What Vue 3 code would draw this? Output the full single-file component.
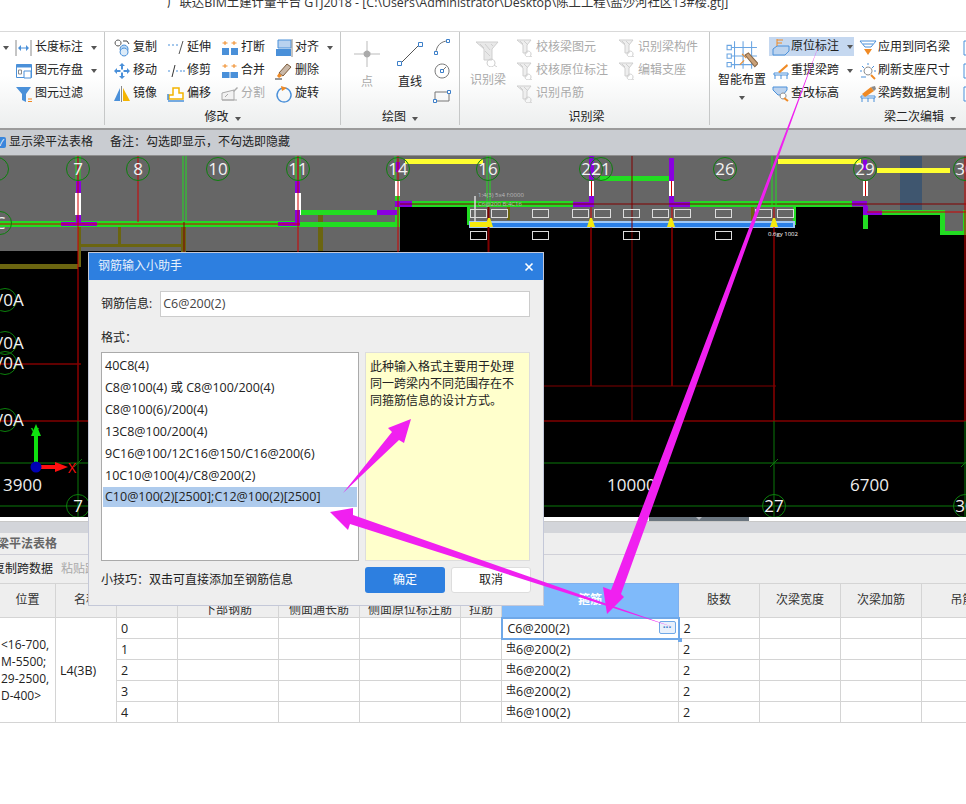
<template>
  <div class="page">
    <div class="titlebar">广联达BIM土建计量平台 GTJ2018 - [C:\Users\Administrator\Desktop\陈工工程\盐沙河社区13#楼.gtj]</div>

    <div class="ribbon">
      <section class="group g0">
        <div class="rows">
          <div v-for="t in group0" :key="t.label" class="tool">
            <Icon :name="t.icon" />
            <span>{{ t.label }}</span>
            <i v-if="t.caret" class="caret"></i>
          </div>
        </div>
        <i class="caret stray"></i>
      </section>

      <section class="group g1">
        <div class="rows four">
          <div v-for="t in group1" :key="t.label" class="tool" :class="{ off: t.off }">
            <Icon :name="t.icon" />
            <span>{{ t.label }}</span>
            <i v-if="t.caret" class="caret"></i>
          </div>
        </div>
        <div class="group-label">修改<i class="caret"></i></div>
      </section>

      <section class="group g2">
        <div class="draw">
          <div class="big off"><Icon name="point" :size="30" /><span>点</span></div>
          <div class="big"><Icon name="line" :size="30" /><span>直线</span></div>
          <div class="small-icons">
            <Icon name="arc" :size="18" />
            <Icon name="circle" :size="18" />
            <Icon name="rect" :size="18" />
          </div>
        </div>
        <div class="group-label">绘图<i class="caret"></i></div>
      </section>

      <section class="group g3">
        <div class="recognise">
          <div class="big off"><Icon name="beamId" :size="26" /><span>识别梁</span></div>
          <div class="col">
            <div v-for="t in group3a" :key="t" class="tool off"><Icon name="checkBeam" /><span>{{ t }}</span></div>
          </div>
          <div class="col">
            <div v-for="t in group3b" :key="t" class="tool off"><Icon name="checkBeam" /><span>{{ t }}</span></div>
          </div>
        </div>
        <div class="group-label shifted">识别梁</div>
      </section>

      <section class="group g4">
        <div class="smart">
          <div class="big wide">
            <Icon name="smart" :size="32" />
            <span>智能布置</span>
            <i class="caret"></i>
          </div>
          <div class="col col-a">
            <div v-for="t in group4a" :key="t.label" class="tool" :class="{ hot: t.hot }">
              <Icon :name="t.icon" />
              <span>{{ t.label }}</span>
              <i v-if="t.caret" class="caret"></i>
            </div>
          </div>
          <div class="col col-b">
            <div v-for="t in group4b" :key="t.label" class="tool">
              <Icon :name="t.icon" />
              <span>{{ t.label }}</span>
            </div>
          </div>
          <div class="col col-c">
            <div v-for="n in 3" :key="n" class="tool"><Icon name="edge" /></div>
          </div>
        </div>
        <div class="group-label right">梁二次编辑<i class="caret"></i></div>
      </section>
    </div>

    <div class="optionbar">
      <span class="check">✓</span>
      <span>显示梁平法表格</span>
      <span class="note">备注：勾选即显示，不勾选即隐藏</span>
    </div>

    <svg class="cad" viewBox="0 156 966 361" width="966" height="361">
      <rect v-for="(r, i) in cadRects" :key="'r' + i" :x="r[0]" :y="r[1]" :width="r[2]" :height="r[3]" :fill="r[4]" />
      <line v-for="(l, i) in cadLines" :key="'l' + i" :x1="l[0]" :y1="l[1]" :x2="l[2]" :y2="l[3]" :stroke="l[4]" :stroke-width="l[5] || 1" />
      <rect v-for="(b, i) in beamBoxes" :key="'b' + i" :x="b[0] + 0.5" :y="b[1] + 0.5" width="16" height="8" fill="none" stroke="#ddd" />
      <polygon v-for="x in supports" :key="'s' + x" :points="`${x - 4},227 ${x + 4},227 ${x + 1},218 ${x - 1},218`" fill="#f5e90c" />
      <g v-for="(a, i) in bubbles" :key="'a' + i">
        <circle :cx="a.x" :cy="a.y" r="11.5" fill="none" stroke="#0c800c" />
        <text :x="a.x" :y="a.y + 6" class="axis" text-anchor="middle">{{ a.t }}</text>
      </g>
      <g v-for="y in [300, 343, 363, 420]" :key="'v' + y">
        <circle cx="5" :cy="y" r="11.5" fill="none" stroke="#0c800c" />
        <text x="-3" :y="y + 6" class="axis">/0A</text>
      </g>
      <text x="3" y="491" class="dim">3900</text>
      <text x="607" y="491" class="dim">10000</text>
      <text x="850" y="491" class="dim">6700</text>
      <text x="768" y="236" class="tiny">0.6gy 1002</text>
      <text x="478" y="197" class="tiny gray">1:4(3) 5x4 f:0000</text>
      <text x="478" y="206" class="tiny gray">C6@200 B:4C16</text>

      <rect x="34" y="436" width="4" height="26" fill="#10e010" />
      <polygon points="36,424 31,436 41,436" fill="#10e010" />
      <rect x="40" y="465" width="18" height="4" fill="#ff1010" />
      <polygon points="68,467 55,462 55,472" fill="#ff1010" />
      <circle cx="36" cy="467" r="5.5" fill="#0000b4" />
      <text x="31" y="438" class="axis-y">Y</text>
      <text x="68" y="473" class="axis-x">X</text>
    </svg>

    <div class="grip"><i></i></div>
    <div class="band"></div>

    <div class="panel-title"><span>梁平法表格</span></div>
    <div class="panel-tools"><span>复制跨数据</span><span class="dim-txt">粘贴跨数据</span></div>

    <table class="grid">
      <colgroup>
        <col v-for="w in colWidths" :key="w.k" :style="{ width: w.w + 'px' }" />
      </colgroup>
      <thead>
        <tr>
          <th>位置</th>
          <th>名称</th>
          <th>跨号</th>
          <th class="low">下部钢筋</th>
          <th class="low">侧面通长筋</th>
          <th class="low">侧面原位标注筋</th>
          <th class="low">拉筋</th>
          <th class="active">箍筋</th>
          <th>肢数</th>
          <th>次梁宽度</th>
          <th>次梁加筋</th>
          <th>吊筋</th>
        </tr>
      </thead>
      <tbody>
        <tr v-for="(r, i) in spans" :key="i">
          <td v-if="i === 0" rowspan="5" class="pos">&lt;16-700,<br />M-5500;<br />29-2500,<br />D-400&gt;</td>
          <td v-if="i === 0" rowspan="5">L4(3B)</td>
          <td>{{ i }}</td>
          <td></td>
          <td></td>
          <td></td>
          <td></td>
          <td v-if="i === 0" class="editing">
            C6@200(2)
            <span class="more">···</span>
            <i class="handle"></i>
          </td>
          <td v-else class="bar"><span class="sym">虫</span>{{ r }}</td>
          <td>2</td>
          <td></td>
          <td></td>
          <td></td>
        </tr>
      </tbody>
    </table>

    <div class="dialog">
      <header>
        <span>钢筋输入小助手</span>
        <svg width="10" height="10" viewBox="0 0 10 10"><path d="M1.5 1.5l7 7M8.5 1.5l-7 7" stroke="#fff" stroke-width="1.6" /></svg>
      </header>
      <div class="dlg-body">
        <div class="info-row">
          <label>钢筋信息:</label>
          <div class="input">C6@200(2)</div>
        </div>
        <div class="fmt-label">格式：</div>
        <div class="fmt-row">
          <ul class="fmt-list">
            <li v-for="(f, i) in formats" :key="f" :class="{ sel: i === 6 }">{{ f }}</li>
          </ul>
          <div class="hint">此种输入格式主要用于处理同一跨梁内不同范围存在不同箍筋信息的设计方式。</div>
        </div>
        <div class="dlg-foot">
          <span class="tip">小技巧：双击可直接添加至钢筋信息</span>
          <button class="ok">确定</button>
          <button class="cancel">取消</button>
        </div>
      </div>
    </div>

    <svg class="arrows" width="966" height="804" viewBox="0 0 966 804">
      <polygon points="820,42 621,594 624,597 607,614 603,587 611,590" fill="#f020f0" />
      <polygon points="673,627 353,515 353,508 330,512 348,530 350,524" fill="#f020f0" />
      <polygon points="343,493 392,432 388,428 411,419 404,443 399,440" fill="#f020f0" />
    </svg>
  </div>
</template>

<script setup>
import { h } from 'vue';

const B = '#4a90d9';
const O = '#f08a24';
const G = '#8a8a8a';
const L = '#cfcfcf';

// each entry: path, fill, stroke
const icons = {
  length: [['M1 1v16M16 1v16', null, G], ['M4 9h9', null, B], ['M3 9l3-3v6zM14 9l-3-3v6z', B]],
  save: [['M1.5 2.5h15v13h-15z', '#fff', B], ['M1.5 2.5h15v3h-15z', B], ['M9 9h7v7H9z', '#fff', B], ['M3.5 8h3v4h-3z', null, G]],
  filter: [['M1 2h15l-5 7v8l-4-2V9z', B], ['M13 14h4M13 16.5h4', null, O]],
  copy: [['M5 1a3 3 0 1 0 .1 0', '#fff', '#555'], ['M11 6a4 4 0 1 0 .1 0', '#bcd8f2', B], ['M11 9a4 4 0 1 0 .1 0', '#dcebf8', B], ['M10 2h4l2 3', null, '#444']],
  move: [['M9 1l3 3h-2v3.5h-2V4H6zM9 17l3-3h-2v-3.5h-2V14H6zM1 9l3-3v2h3.5v2H4v2zM17 9l-3-3v2h-3.5v2H14v2z', B]],
  mirror: [['M1 16L7 3v13z', B], ['M10 3l7 13h-7z', '#f4b400'], ['M8.5 1v16', null, G]],
  extend: [['M1 6h2M5 6h2M9 6h2', null, B], ['M16 2l-4 13', null, '#555']],
  trim: [['M8 3L5 15', null, '#333'], ['M1 9h2M9 9h2M13 9h2M16 9h2', null, B]],
  offset: [['M2 14V10h4V3h6v5h4v6z', '#fff', '#f4b400', 1.5], ['M1 16h16', null, B, 1.5], ['M1 15V9', null, B, 1.5]],
  breakIt: [['M4 2v4M1.5 4h5M13 2v4M10.500 4h5', null, O], ['M1 9h7v7H1zM10 9h7v7h-7z', B]],
  merge: [['M4 2v4M1.5 4h5M13 2v4M10.500 4h5', null, O], ['M1 10h16v6H1z', B], ['M9 10v6', null, '#fff']],
  split: [['M1 15V8l12-3v10z', '#f2f2f2', '#aaa'], ['M1 15h15M4 12l3-3', null, '#aaa'], ['M12 6l4-4 1 1-4 4z', '#aaa']],
  align: [['M3 1h13v8H3z', '#b9d2ef', B], ['M1 10h15v7H1z', B], ['M17 0v18', null, G]],
  del: [['M12 2l4 3-8 9-4-3z', '#c9b8a8', '#7b5a3a'], ['M4 11l3 3-3 2-2-2z', O], ['M0 17h7', null, '#333']],
  rotate: [['M9 3a7 7 0 1 0 .1 0', null, B, 1.4], ['M6 1l6 2-5 3z', O]],
  point: [['M15 2v26M2 15h26', null, '#bbb'], ['M15 11.500a3.500 3.500 0 1 0 .1 0', '#aaa']],
  line: [['M5 25L25 5', null, '#555'], ['M2.500 22.500h4v4h-4zM23.500 3.500h4v4h-4z', '#fff', '#3c7fc9']],
  arc: [['M3 15C3 8 8 3 15 3', null, '#777'], ['M1.500 13.500h3v3h-3zM13.500 1.500h3v3h-3z', '#fff', '#3c7fc9']],
  circle: [['M9 2a7 7 0 1 0 .1 0', null, '#777'], ['M7.500 7.500h3v3h-3z', '#fff', '#3c7fc9'], ['M10 8l3-3', null, '#777']],
  rect: [['M2 6h14v9H2z', null, '#777'], ['M.5 13.500h3v3h-3zM14.500 4.500h3v3h-3z', '#fff', '#3c7fc9']],
  beamId: [['M1 1h22l-6 7v11H9V8z', '#e8e8e8', L], ['M5 3l4 4M10 3l5 6M16 3l2 2M10 10l5 5', null, L], ['M16 18a4 4 0 1 0 .1 0M19 24l3 2', null, L]],
  checkBeam: [['M1 1h14l-4 5v8H7V6z', '#eee', L], ['M4 2l3 3M8 2l4 4', null, L], ['M12 12a3 3 0 1 0 .1 0M14 17l2 1', null, L]],
  smart: [['M8 2v26M16 2v26M24 2v26M3 8h26M3 16h26M3 24h26', null, '#6aa5e2'], ['M1 6h4v4H1zM1 14h4v4H1zM1 22h4v4H1z', '#fff', '#6aa5e2'], ['M15 14l4 4M17 20l-4 4', null, O], ['M18 15l3-2 9 10-3 3z', '#caa27a', '#8a6a4a']],
  origin: [['M1 11l4-3h12v5l-4 4H1z', '#bcd3ee', B], ['M5 1v7', null, O], ['M5 2h6M5 5h5', null, O]],
  reraise: [['M2 11h14v2H2z', '#fff', B], ['M3 13v4M9 13v4M15 13v4', null, B], ['M6 10l9-8 1 2-8 7z', O]],
  level: [['M1 2h14v3l-4 5H6L1 5z', '#bcd3ee', B], ['M11 8a3 3 0 1 0 .1 0', '#fff', G], ['M12 13l4 3', null, O, 2]],
  applySame: [['M1 2h16l-5 6H6z', '#fff', B], ['M4 5h10', null, B], ['M5 10h8l-4 6z', O]],
  refresh: [['M9 1v2M3 4l2 2M15 4l-2 2M1 9h2M17 9h-2', null, B], ['M9 5a4 4 0 1 0 .1 0', '#fff', G], ['M12 13l4 4', null, O, 2], ['M2 15h5', null, B]],
  beamCopy: [['M2 11h14v2H2zM3 13v4M9 13v4M15 13v4', '#fff', B], ['M3 9l9-7 3 4-9 6z', O], ['M12 2l4-1 1 3-2 2z', G]],
  edge: [['M2 2h16v14H2z', '#fff', B], ['M6 6h2v2H6zM6 11h2v2H6z', O]]
};

const Icon = (props) =>
  h(
    'svg',
    {
      class: 'ic',
      width: props.size || 18,
      height: props.size || 18,
      viewBox: (props.size || 18) >= 26 ? `0 0 ${props.size === 26 ? 26 : 30} ${props.size === 26 ? 26 : 30}` : '0 0 18 18'
    },
    (icons[props.name] || []).map((p) =>
      h('path', { d: p[0], fill: p[1] || 'none', stroke: p[2] || 'none', 'stroke-width': p[3] || 1 })
    )
  );
Icon.props = ['name', 'size'];

const group0 = [
  { icon: 'length', label: '长度标注', caret: true },
  { icon: 'save', label: '图元存盘', caret: true },
  { icon: 'filter', label: '图元过滤' }
];

// column order: top to bottom, then next column
const group1 = [
  { icon: 'copy', label: '复制' },
  { icon: 'move', label: '移动' },
  { icon: 'mirror', label: '镜像' },
  { icon: 'extend', label: '延伸' },
  { icon: 'trim', label: '修剪' },
  { icon: 'offset', label: '偏移' },
  { icon: 'breakIt', label: '打断' },
  { icon: 'merge', label: '合并' },
  { icon: 'split', label: '分割', off: true },
  { icon: 'align', label: '对齐', caret: true },
  { icon: 'del', label: '删除' },
  { icon: 'rotate', label: '旋转' }
];

const group3a = ['校核梁图元', '校核原位标注', '识别吊筋'];
const group3b = ['识别梁构件', '编辑支座'];

const group4a = [
  { icon: 'origin', label: '原位标注', caret: true, hot: true },
  { icon: 'reraise', label: '重提梁跨', caret: true },
  { icon: 'level', label: '查改标高' }
];
const group4b = [
  { icon: 'applySame', label: '应用到同名梁' },
  { icon: 'refresh', label: '刷新支座尺寸' },
  { icon: 'beamCopy', label: '梁跨数据复制' }
];

const GRAY = '#666666';
const GRN = '#22dc22';
const PUR = '#8a00e0';
const OLV = '#6b6510';
const RED = '#d00000';
const DRED = '#800000';
const DGRN = '#0a780a';

const cadRects = [
  [0, 156, 400, 95, GRAY],
  [400, 156, 566, 51, GRAY],
  [467, 207, 329, 16, GRAY],
  [867, 207, 99, 8, GRAY],
  [945, 215, 21, 17, GRAY],
  [900, 156, 22, 59, '#3f566f'],
  // olive secondary beams
  [78, 225, 3, 42, OLV],
  [80, 244, 104, 3, OLV],
  [118, 227, 3, 18, OLV],
  [181, 225, 5, 28, OLV],
  [0, 264, 78, 5, OLV],
  [318, 215, 5, 36, OLV],
  [507, 207, 3, 13, OLV],
  [751, 207, 3, 13, OLV],
  // yellow
  [405, 159, 78, 5, '#ffff30'],
  [778, 159, 83, 5, '#ffff30'],
  [877, 168, 73, 5, '#ffff30'],
  // green main runs
  [0, 221, 300, 6, GRN],
  [300, 210, 77, 5, GRN],
  [300, 222, 97, 5, GRN],
  [395, 196, 5, 31, GRN],
  [400, 201, 67, 6, GRN],
  [467, 201, 106, 6, GRN],
  [467, 207, 3, 18, GRN],
  [690, 201, 162, 6, GRN],
  [793, 207, 3, 18, GRN],
  [600, 176, 69, 5, GRN],
  [863, 215, 5, 14, GRN],
  [882, 210, 63, 5, GRN],
  [940, 210, 5, 24, GRN],
  [940, 231, 26, 4, GRN],
  [963, 210, 3, 22, GRN],
  // beam
  [469, 221, 326, 7, '#9fc8f5'],
  [471, 223, 322, 4, '#2a80e8'],
  [470, 222, 18, 5, '#f5e90c'],
  // column stems, white with red heart
  [75, 193, 6, 22, '#fff'],
  [295, 193, 6, 22, '#fff'],
  [395, 181, 5, 15, '#fff'],
  [589, 181, 5, 15, '#fff'],
  [669, 181, 5, 15, '#fff'],
  [863, 181, 5, 15, '#fff'],
  // purple supports
  [76, 181, 5, 12, PUR],
  [76, 215, 5, 7, PUR],
  [61, 222, 36, 4, PUR],
  [295, 181, 5, 12, PUR],
  [295, 210, 5, 16, PUR],
  [278, 222, 22, 4, PUR],
  [377, 210, 20, 5, PUR],
  [395, 201, 17, 6, PUR],
  [395, 162, 5, 10, PUR],
  [573, 202, 17, 5, PUR],
  [589, 196, 5, 11, PUR],
  [589, 156, 5, 25, PUR],
  [669, 158, 5, 23, PUR],
  [669, 196, 5, 11, PUR],
  [669, 202, 21, 5, PUR],
  [852, 201, 15, 5, PUR],
  [863, 206, 5, 9, PUR],
  [863, 160, 4, 10, PUR],
  [863, 211, 19, 4, PUR]
];

const cadLines = [
  [0, 224, 300, 224, RED],
  [138, 156, 138, 222, RED],
  [76, 156, 76, 181, GRN],
  [80, 156, 80, 181, GRN],
  [78, 156, 78, 421, RED],
  [298, 156, 298, 253, RED],
  [398, 156, 398, 253, RED],
  [183, 156, 183, 222, GRN, 1],
  [186, 156, 186, 222, GRN, 1],
  [184, 222, 184, 253, DRED],
  [296, 156, 296, 181, GRN],
  [300, 156, 300, 181, GRN],
  [395, 156, 395, 181, GRN],
  [400, 204, 966, 204, DRED],
  [487, 156, 487, 207, GRN],
  [490, 156, 490, 207, GRN],
  [488.5, 207, 488.5, 253, DRED, 2],
  [591.5, 181, 591.5, 196, RED],
  [671.5, 181, 671.5, 196, RED],
  [865.5, 181, 865.5, 196, RED],
  [591, 207, 591, 386, RED],
  [632, 156, 632, 421, DRED],
  [672, 207, 672, 386, RED],
  [772, 156, 772, 207, GRN],
  [776, 156, 776, 207, GRN],
  [774, 207, 774, 421, RED],
  [867, 212, 966, 212, RED],
  [965, 156, 965, 421, RED],
  [540, 386, 776, 386, DRED],
  [0, 364, 81, 364, DRED, 1.5],
  [0, 421, 966, 421, DRED, 1.5],
  [0, 463, 966, 463, DGRN],
  [0, 506, 966, 506, DGRN],
  [78, 421, 78, 517, DGRN],
  [774, 421, 774, 517, DGRN],
  [965, 421, 965, 517, DGRN],
  [74, 467, 82, 459, DGRN],
  [770, 467, 778, 459, DGRN],
  [961, 467, 966, 462, DGRN],
  [475, 196, 475, 222, '#ddd', 1.5]
];

const beamBoxes = [
  [470, 209], [491, 209], [532, 209], [572, 209], [594, 209], [623, 209],
  [652, 209], [674, 209], [715, 209], [755, 209], [777, 209],
  [470, 231], [532, 231], [623, 231], [715, 231]
];

const supports = [489, 591, 671, 774];

const bubbles = [
  { x: -3, y: 169, t: '' },
  { x: 78, y: 169, t: '7' },
  { x: 138, y: 169, t: '8' },
  { x: 218, y: 169, t: '10' },
  { x: 298, y: 169, t: '11' },
  { x: 398, y: 169, t: '14' },
  { x: 488, y: 169, t: '16' },
  { x: 591, y: 169, t: '22' },
  { x: 601, y: 169, t: '21' },
  { x: 725, y: 169, t: '26' },
  { x: 865, y: 169, t: '29' },
  { x: 965, y: 169, t: '30' },
  { x: 0, y: 223, t: 'C' },
  { x: 78, y: 506, t: '7' },
  { x: 774, y: 506, t: '27' },
  { x: 965, y: 506, t: '30' }
];

const colWidths = [
  { k: 'pos', w: 56 }, { k: 'name', w: 61 }, { k: 'span', w: 61 }, { k: 'bottom', w: 101 },
  { k: 'side', w: 81 }, { k: 'sideAt', w: 101 }, { k: 'tie', w: 41 }, { k: 'stirrup', w: 177 },
  { k: 'legs', w: 81 }, { k: 'width', w: 81 }, { k: 'add', w: 81 }, { k: 'hang', w: 82 }
];

const spans = ['', '6@200(2)', '6@200(2)', '6@200(2)', '6@100(2)'];

const formats = [
  '40C8(4)',
  'C8@100(4) 或 C8@100/200(4)',
  'C8@100(6)/200(4)',
  '13C8@100/200(4)',
  '9C16@100/12C16@150/C16@200(6)',
  '10C10@100(4)/C8@200(2)',
  'C10@100(2)[2500];C12@100(2)[2500]'
];
</script>

<style>
html, body {
  margin: 0;
  background: #fff;
  overflow: hidden;
}
</style>

<style scoped>
.page {
  position: relative;
  width: 966px;
  height: 804px;
  overflow: hidden;
  background: #fff;
  color: #222;
  font: 12px/1.2 "Open Sans", "Noto Sans CJK SC", sans-serif;
}

.titlebar {
  height: 31px;
  padding-left: 167px;
  font-size: 12.4px;
  line-height: 13px;
  margin-top: -4px;
  margin-bottom: 4px;
  white-space: nowrap;
  color: #333;
}

.ribbon {
  display: flex;
  height: 99px;
  border-top: 1px solid #d9d9d9;
  border-bottom: 2px solid #9b9b9b;
  box-sizing: border-box;
  background: linear-gradient(#fff 45%, #eceeee);
  overflow: hidden;
}

.group {
  position: relative;
  box-sizing: border-box;
  display: flex;
  flex-direction: column;
  flex: none;
  padding-top: 4px;
  border-right: 1px solid #c6c8c8;
  margin-bottom: 3px;
}

.g0 { width: 105px; padding-left: 15px; }
.g1 { width: 236px; padding-left: 8px; }
.g2 { width: 119px; padding-left: 11px; }
.g3 { width: 250px; }
.g4 { width: 256px; border-right: 0; padding-left: 8px; }

.rows {
  display: grid;
  grid-template-rows: repeat(3, 23px);
}

.rows.four {
  grid-auto-flow: column;
  grid-template-columns: repeat(4, 54px);
}

.tool {
  display: flex;
  align-items: center;
  gap: 2px;
  height: 23px;
  white-space: nowrap;
}

.off { color: #aaa; }

.ic { flex: none; }

.caret {
  display: inline-block;
  width: 0;
  height: 0;
  margin-left: 6px;
  border: 3px solid transparent;
  border-top: 4px solid #555;
  border-bottom: 0;
}

.stray {
  position: absolute;
  left: -3px;
  top: 14px;
}

.group-label {
  position: absolute;
  left: 0;
  right: 0;
  bottom: -2px;
  height: 20px;
  line-height: 20px;
  text-align: center;
}

.group-label.shifted { padding-left: 4px; box-sizing: border-box; }

.group-label.right {
  text-align: right;
  padding-right: 10px;
}

.draw, .recognise, .smart {
  display: flex;
}

.big {
  display: flex;
  flex-direction: column;
  align-items: center;
  width: 30px;
  flex: none;
  font-size: 12px;
}

.draw .big { margin-right: 13px; padding-top: 3px; gap: 3px; }
.draw .big span { line-height: 20px; }

.small-icons {
  display: flex;
  flex-direction: column;
  gap: 6px;
  margin-left: -5px;
  padding-top: 2px;
}

.recognise .big {
  width: 56px;
  padding-top: 5px;
  gap: 6px;
}

.col {
  display: grid;
  grid-template-rows: repeat(3, 23px);
  flex: none;
}

.recognise .col { width: 102px; }

.smart .wide {
  width: 48px;
  margin-right: 3px;
  padding-top: 3px;
  gap: 2px;
}

.smart .wide .caret { margin: 7px 0 0; }

.smart .col .tool { gap: 1px; }
.smart .col .caret { margin-left: 7px; }
.col-a { width: 88px; }
.col-b { width: 103px; }
.col-b .tool, .col-c .tool { padding-left: 2px; }

.col-a .tool { padding-left: 3px; box-sizing: border-box; width: 85px; }

.hot {
  background: #c5d8f0;
  margin-top: 1px;
  height: 19px;
}

.optionbar {
  display: flex;
  align-items: center;
  height: 26px;
  background: #c9ccd1;
  margin-left: -4px;
  box-sizing: border-box;
  border-bottom: 1px solid #8f8f8f;
}

.check {
  display: inline-block;
  width: 10px;
  height: 11px;
  margin-right: 3px;
  border-radius: 2px;
  background: #3a86dc;
  color: #fff;
  font-size: 9px;
  line-height: 11px;
  text-align: center;
}

.note { margin-left: 17px; }

.cad {
  display: block;
  background: #000;
}

.cad text { font-family: "Open Sans", sans-serif; }

.axis { fill: #f2f2f2; font-size: 17px; }
.dim { fill: #eee; font-size: 17px; }
.tiny { fill: #fff; font-size: 6px; }
.tiny.gray { fill: #bbb; }
.axis-y { fill: #10e010; font-size: 14px; }
.axis-x { fill: #ff1010; font-size: 14px; }

.grip {
  height: 4px;
  background: #fff;
}

.grip i {
  position: relative;
  display: block;
  width: 100px;
  height: 4px;
  margin-left: 649px;
  background: #6b7680;
}

.grip i::after {
  content: "";
  position: absolute;
  left: 47px;
  top: 0;
  border: 3px solid transparent;
  border-top: 3px solid #b8bcc2;
  border-bottom: 0;
}

.band {
  height: 12px;
  background: #d3d5da;
  border-top: 1px solid #c8c8c8;
  box-sizing: border-box;
}

.panel-title {
  height: 22px;
  line-height: 21px;
  background: #eee;
  border-bottom: 1px solid #d0d0d8;
  box-sizing: border-box;
  color: #666;
  font-weight: 700;
}

.panel-title span { margin-left: -3px; }

.panel-tools {
  display: flex;
  gap: 8px;
  height: 28px;
  line-height: 27px;
  margin-left: -7px;
  background: #eee;
}

.dim-txt { color: #aaa; }

.grid {
  border-collapse: collapse;
  table-layout: fixed;
  width: 967px;
  margin-left: -1px;
  position: relative;
  font-size: 12.5px;
}

.grid th, .grid td {
  border: 1px solid #d4d4d4;
  padding: 0 0 0 4px;
  font-weight: 400;
  overflow: hidden;
  white-space: nowrap;
  box-sizing: border-box;
}

.grid th {
  height: 34px;
  background: #eee;
  text-align: center;
  padding: 0;
  color: #333;
  font-size: 12px;
}

.grid th.low {
  vertical-align: bottom;
  line-height: 14px;
}

.grid th.active {
  background: #7fbafa;
  border-color: #7fb0ee;
  color: #fff;
  font-weight: 700;
}

.grid td {
  height: 21px;
  line-height: 17px;
  color: #222;
}

.grid td.pos {
  padding: 0 0 0 1px;
  line-height: 17px;
  font-size: 12px;
}

.sym {
  font-size: 10px;
  line-height: 0;
  vertical-align: 3px;
}

.grid td.editing {
  position: relative;
  padding-left: 5px;
  overflow: visible;
  border: 2px solid #6fa8e8;
}

.more {
  position: absolute;
  right: 2px;
  top: 2px;
  width: 15px;
  height: 11px;
  border: 1px solid #6fa8e8;
  border-radius: 2px;
  background: #e8f0fb;
  color: #3c7fc9;
  font-size: 10px;
  line-height: 10px;
  text-align: center;
  font-weight: 700;
}

.handle {
  position: absolute;
  right: -4px;
  bottom: -4px;
  width: 4px;
  height: 4px;
  background: #6fa8e8;
}

.dialog {
  position: absolute;
  left: 89px;
  top: 253px;
  width: 454px;
  height: 352px;
  background: #eee;
  box-shadow: 0 0 0 1px #c4c8d8;
}

.dialog header {
  display: flex;
  align-items: center;
  justify-content: space-between;
  height: 27px;
  padding: 0 9px;
  background: #2d7fe0;
  color: #e8f1fc;
  font-size: 12px;
}

.dlg-body { padding: 11px 12px 0; }

.info-row {
  display: flex;
  align-items: center;
  gap: 8px;
}

.input {
  width: 370px;
  height: 26px;
  box-sizing: border-box;
  line-height: 24px;
  padding-left: 2px;
  background: #fff;
  border: 1px solid #ccc;
  color: #444;
  font-size: 12.5px;
}

.fmt-label { margin: 13px 0 6px; line-height: 16px; }

.fmt-row {
  display: flex;
  gap: 6px;
}

.fmt-list {
  width: 258px;
  height: 209px;
  margin: 0;
  padding: 2px 1px;
  box-sizing: border-box;
  list-style: none;
  background: #fff;
  border: 1px solid #aaa;
  font-size: 12.5px;
}

.fmt-list li {
  height: 22px;
  line-height: 22px;
  padding-left: 2px;
  white-space: nowrap;
}

.fmt-list li.sel {
  height: 20px;
  line-height: 20px;
  background: #aecbed;
}

.hint {
  width: 165px;
  height: 209px;
  box-sizing: border-box;
  padding: 5px 4px;
  background: #ffffcc;
  border: 1px solid #ddd;
  line-height: 17px;
}

.dlg-foot {
  display: flex;
  align-items: center;
  margin-top: 6px;
}

.tip { width: 264px; }

.dlg-foot button {
  width: 80px;
  height: 26px;
  padding: 0;
  border-radius: 3px;
  font: inherit;
}

.ok {
  background: #2d7fe0;
  border: 0;
  color: #fff;
  margin-right: 6px;
}

.cancel {
  background: #fff;
  border: 1px solid #ddd;
  color: #222;
}

.arrows {
  position: absolute;
  left: 0;
  top: 0;
  pointer-events: none;
}
</style>
